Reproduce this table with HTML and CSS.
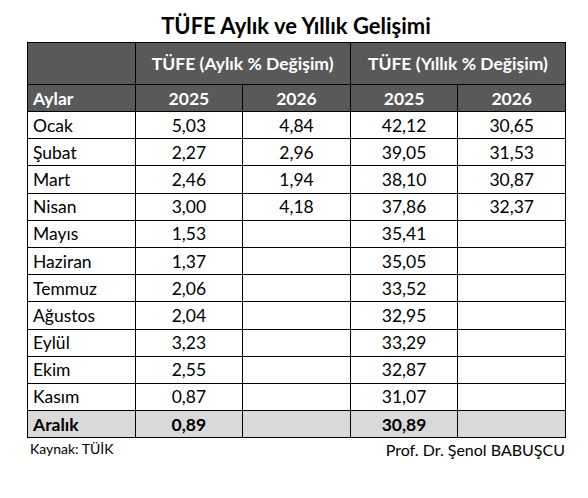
FILE: index.html
```html
<!DOCTYPE html>
<html lang="tr">
<head>
    <meta charset="UTF-8">
    <meta name="viewport" content="width=device-width, initial-scale=1.0">
    <title>TÜFE Aylık ve Yıllık Gelişimi</title>
    <link rel="stylesheet" href="styles.css">
</head>
<body>

    <div class="page">
        <h1 class="title">TÜFE Aylık ve Yıllık Gelişimi</h1>

        <table class="cpi">
            <thead>
                <tr class="group">
                    <th></th>
                    <th colspan="2">TÜFE (Aylık % Değişim)</th>
                    <th colspan="2">TÜFE (Yıllık % Değişim)</th>
                </tr>
                <tr class="years">
                    <th class="month">Aylar</th>
                    <th>2025</th>
                    <th>2026</th>
                    <th>2025</th>
                    <th>2026</th>
                </tr>
            </thead>
            <tbody>
                <tr><td class="month">Ocak</td><td>5,03</td><td>4,84</td><td>42,12</td><td>30,65</td></tr>
                <tr><td class="month">Şubat</td><td>2,27</td><td>2,96</td><td>39,05</td><td>31,53</td></tr>
                <tr><td class="month">Mart</td><td>2,46</td><td>1,94</td><td>38,10</td><td>30,87</td></tr>
                <tr><td class="month">Nisan</td><td>3,00</td><td>4,18</td><td>37,86</td><td>32,37</td></tr>
                <tr><td class="month">Mayıs</td><td>1,53</td><td></td><td>35,41</td><td></td></tr>
                <tr><td class="month">Haziran</td><td>1,37</td><td></td><td>35,05</td><td></td></tr>
                <tr><td class="month">Temmuz</td><td>2,06</td><td></td><td>33,52</td><td></td></tr>
                <tr><td class="month">Ağustos</td><td>2,04</td><td></td><td>32,95</td><td></td></tr>
                <tr><td class="month">Eylül</td><td>3,23</td><td></td><td>33,29</td><td></td></tr>
                <tr><td class="month">Ekim</td><td>2,55</td><td></td><td>32,87</td><td></td></tr>
                <tr><td class="month">Kasım</td><td>0,87</td><td></td><td>31,07</td><td></td></tr>
                <tr class="last"><td class="month">Aralık</td><td>0,89</td><td></td><td>30,89</td><td></td></tr>
            </tbody>
        </table>

        <div class="notes">
            <span>Kaynak: TÜİK</span>
            <span class="author">Prof. Dr. Şenol BABUŞCU</span>
        </div>
    </div>

</body>
</html>
```

FILE: styles.css
```css
body {
    margin: 0;
    background-color: #ffffff;
    color: #000000;
    font-family: Lato, "Open Sans", sans-serif;
}

.page {
    width: 538px;
    padding: 13px 0 0 27px;
}

.title {
    margin: 0 0 3px 0;
    font-size: 22px;
    line-height: 26px;
    font-weight: bold;
    text-align: center;
}

.cpi {
    width: 539px;
    border-collapse: collapse;
    table-layout: fixed;
    font-size: 17.5px;
}

.cpi th,
.cpi td {
    border: 1px solid #000000;
    padding: 0 6px;
    text-align: center;
}

.cpi thead th {
    background-color: #595959;
    color: #ffffff;
    font-weight: bold;
}

.cpi .group th {
    height: 41px;
}

.cpi .years th {
    height: 26px;
}

.cpi td {
    height: 26.2px;
}

.cpi .month {
    text-align: left;
    padding-left: 5px;
}

.cpi .last td {
    background-color: #d9d9d9;
    font-weight: bold;
}

.notes {
    display: flex;
    justify-content: space-between;
    padding: 2px 0 0 3px;
    font-size: 14px;
}

.notes .author {
    font-size: 16px;
}
```
